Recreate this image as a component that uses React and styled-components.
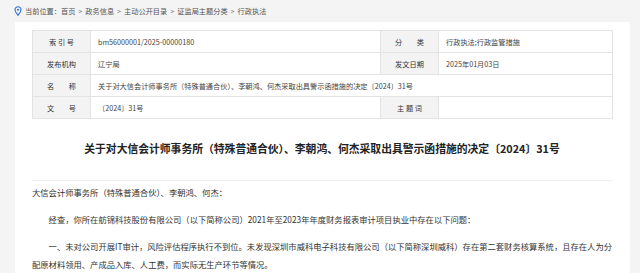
import React from "react";
import styled, { createGlobalStyle } from "styled-components";

const GlobalStyle = createGlobalStyle`
  html, body {
    margin: 0;
    padding: 0;
    background: #f4f4f4;
    font-family: "Noto Sans CJK SC", "Noto Sans", sans-serif;
    color: #333;
  }
`;

const Page = styled.div`
  width: 640px;
  height: 273px;
  overflow: hidden;
  background: #f4f4f4;
`;

const Crumbs = styled.div`
  height: 22px;
  display: flex;
  align-items: center;
  padding-left: 14px;
  font-size: 7.2px;
  color: #555;
  gap: 3px;
`;

const Sep = styled.span`
  margin: 0 3px;
  color: #777;
`;

const Card = styled.div`
  margin-left: 15px;
  width: 615px;
  background: #fff;
  padding: 8px 18px 0 17px;
  box-sizing: border-box;
  min-height: 251px;
`;

const InfoTable = styled.table`
  width: 580px;
  border-collapse: collapse;
  table-layout: fixed;
  font-size: 7.2px;
`;

const Cell = styled.td`
  height: 21px;
  border: 1px solid #e3e3e3;
  padding: 0 7px;
  color: #444;
  white-space: nowrap;
`;

const Label = styled(Cell)`
  background: #f3f3f3;
  text-align: center;
  color: #333;
  padding: 0;
  white-space: pre;
`;

const Title = styled.h1`
  margin: 22px 0 0;
  padding-bottom: 25px;
  border-bottom: 1px solid #eee;
  font-size: 10.8px;
  line-height: 14px;
  font-weight: 600;
  text-align: center;
  color: #222;
`;

const Body = styled.div`
  padding-top: 2px;
  font-size: 8.3px;
  line-height: 18px;
  color: #333;
`;

const Para = styled.p`
  margin: 0 0 9px;
  text-indent: ${(p) => (p.$indent ? "2em" : "0")};
  text-align: justify;
`;

const PinIcon = () => (
  <svg width="8" height="10" viewBox="0 0 16 20">
    <path
      d="M8 1.5a6 6 0 0 0-6 6c0 4.3 6 11 6 11s6-6.7 6-11a6 6 0 0 0-6-6z"
      fill="none"
      stroke="#3b78d8"
      strokeWidth="2.4"
    />
    <circle cx="8" cy="7.5" r="2.2" fill="#3b78d8" />
  </svg>
);

const crumbs = ["首页", "政务信息", "主动公开目录", "证监局主题分类", "行政执法"];

export default function App() {
  return (
    <Page>
      <GlobalStyle />
      <Crumbs>
        <PinIcon />
        <span>
          当前位置：
          {crumbs.map((c, i) => (
            <React.Fragment key={c}>
              {i > 0 && <Sep>&gt;</Sep>}
              {c}
            </React.Fragment>
          ))}
        </span>
      </Crumbs>
      <Card>
        <InfoTable>
          <colgroup>
            <col style={{ width: 58 }} />
            <col style={{ width: 290 }} />
            <col style={{ width: 58 }} />
            <col style={{ width: 174 }} />
          </colgroup>
          <tbody>
            <tr>
              <Label>{"索 引 号"}</Label>
              <Cell>bm56000001/2025-00000180</Cell>
              <Label>{"分　　类"}</Label>
              <Cell>行政执法;行政监管措施</Cell>
            </tr>
            <tr>
              <Label>发布机构</Label>
              <Cell>辽宁局</Cell>
              <Label>发文日期</Label>
              <Cell>2025年01月03日</Cell>
            </tr>
            <tr>
              <Label>{"名　　称"}</Label>
              <Cell colSpan={3}>
                关于对大信会计师事务所（特殊普通合伙）、李朝鸿、何杰采取出具警示函措施的决定〔2024〕31号
              </Cell>
            </tr>
            <tr>
              <Label>{"文　　号"}</Label>
              <Cell>〔2024〕31号</Cell>
              <Label>{"主 题 词"}</Label>
              <Cell />
            </tr>
          </tbody>
        </InfoTable>
        <Title>
          关于对大信会计师事务所（特殊普通合伙）、李朝鸿、何杰采取出具警示函措施的决定〔2024〕31号
        </Title>
        <Body>
          <Para>大信会计师事务所（特殊普通合伙）、李朝鸿、何杰：</Para>
          <Para $indent>
            经查，你所在舫锦科技股份有限公司（以下简称公司）2021年至2023年年度财务报表审计项目执业中存在以下问题：
          </Para>
          <Para $indent>
            一、未对公司开展IT审计，风险评估程序执行不到位。未发现深圳市威科电子科技有限公司（以下简称深圳威科）存在第二套财务核算系统，且存在人为分配原材料领用、产成品入库、人工费，而实际无生产环节等情况。
          </Para>
        </Body>
      </Card>
    </Page>
  );
}
